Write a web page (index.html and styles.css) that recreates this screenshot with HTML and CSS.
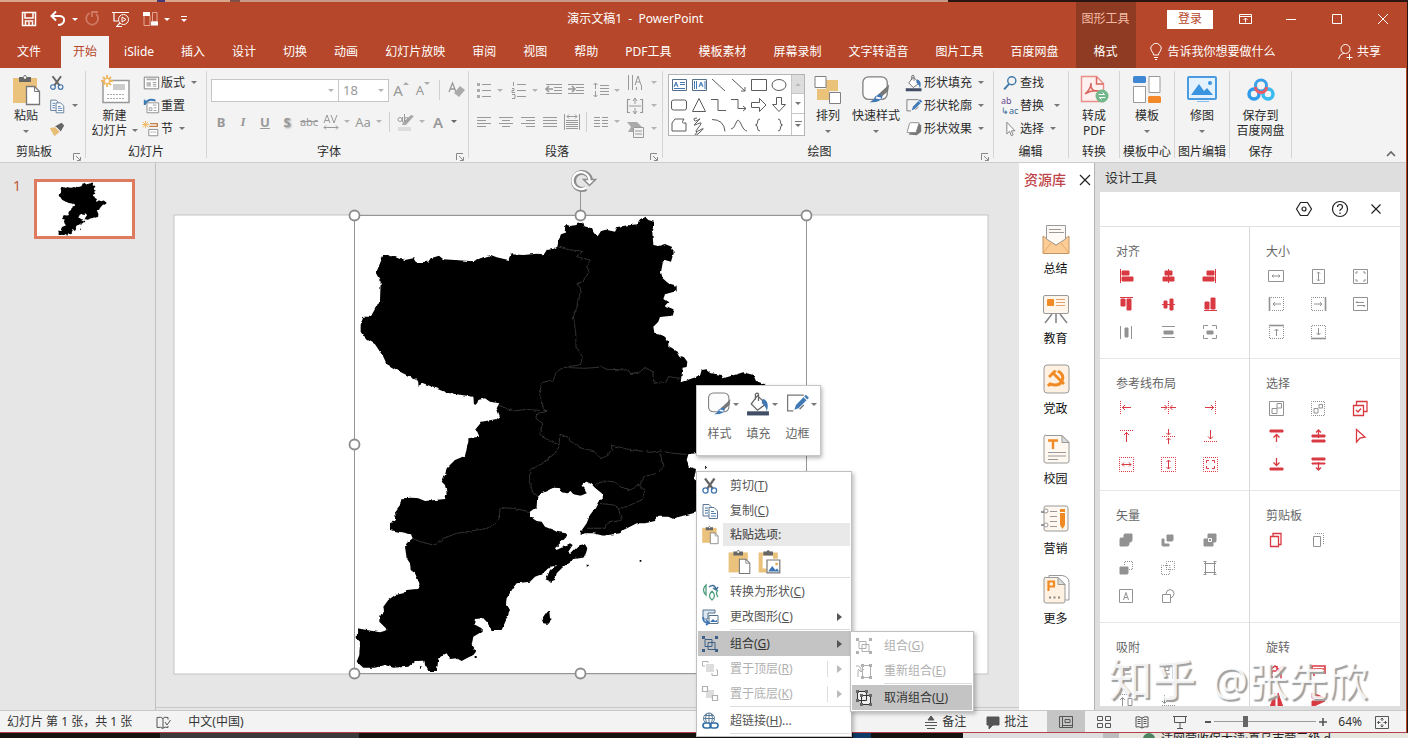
FILE: index.html
```html
<!DOCTYPE html>
<html lang="zh-CN">
<head>
<meta charset="utf-8">
<title>演示文稿1 - PowerPoint</title>
<link rel="stylesheet" href="styles.css">
</head>
<body>
<svg class="defs" aria-hidden="true">
  <filter id="coast" x="-5%" y="-5%" width="110%" height="110%"><feTurbulence type="fractalNoise" baseFrequency=".2" numOctaves="2" seed="4"/><feDisplacementMap in="SourceGraphic" scale="3" xChannelSelector="R" yChannelSelector="G"/></filter>
  <symbol id="map" viewBox="174 215 814 459" overflow="visible">
    <g filter="url(#coast)"><g transform="translate(340 165) scale(.33333)">
      <path fill="#000" d="M130 270 145 270 150 274 165 273 195 285 220 280 228 292 265 290 272 280 297 272 310 283 400 289 425 278 453 270 470 277 505 285 512 268 550 270 590 266 612 268 620 255 640 252 652 245 656 225 663 208 674 204 676 178 690 183 710 180 712 173 730 172 733 184 755 190 762 205 773 214 783 198 798 194 825 200 832 186 855 182 890 178 900 163 915 155 925 165 942 170 942 188 937 200 940 240 955 243 975 237 995 245 1001 262 993 290 975 285 968 295 963 322 968 340 985 355 1010 362 1010 378 975 388 970 402 985 412 975 422 1001 433 995 452 960 456 955 470 940 485 943 503 975 515 985 530 985 545 1010 560 1018 576 1030 574 1042 590 1040 606 1028 608 1022 652 1080 632 1085 615 1100 613 1115 625 1145 630 1150 640 1210 622 1240 630 1248 648 1275 658 1293 690 1240 730 1200 720 1122 813 1100 860 1045 868 1040 885 1046 905 1068 912 1062 942 1080 955 1075 1040 1040 1050 1015 1055 1000 1062 985 1055 950 1055 945 1068 915 1075 890 1075 870 1085 850 1095 840 1105 820 1108 790 1112 760 1105 735 1105 722 1110 722 1100 740 1075 750 1050 765 1030 775 1010 789 997 785 985 765 968 755 958 740 950 728 955 725 962 735 972 740 985 722 992 700 988 692 978 680 985 663 980 660 970 640 968 620 978 605 985 592 997 590 1025 570 1040 570 1055 590 1068 605 1070 615 1085 640 1095 650 1100 678 1105 680 1115 665 1130 645 1150 650 1155 670 1145 690 1135 698 1140 685 1160 690 1168 708 1150 720 1140 735 1138 742 1150 738 1165 730 1178 700 1182 690 1190 670 1205 650 1225 645 1245 630 1250 617 1245 630 1215 652 1200 630 1205 620 1215 605 1228 585 1235 570 1250 530 1255 520 1268 500 1300 498 1315 510 1335 505 1350 485 1395 455 1395 440 1370 430 1360 405 1362 402 1378 425 1390 425 1400 400 1415 395 1440 408 1460 400 1470 380 1480 365 1488 350 1480 330 1482 320 1465 310 1470 295 1480 293 1500 290 1518 265 1518 255 1500 253 1487 225 1488 205 1505 160 1508 135 1500 105 1508 70 1508 50 1490 58 1470 60 1430 50 1420 52 1390 80 1395 120 1402 143 1395 118 1370 118 1355 132 1340 130 1325 145 1305 165 1290 190 1285 200 1275 230 1272 238 1270 238 1255 225 1225 212 1215 210 1195 200 1180 195 1145 200 1135 218 1120 213 1108 150 1095 150 1075 168 1065 165 1040 180 1020 185 1000 215 998 235 1000 255 1008 315 1002 320 985 315 960 305 950 315 930 320 910 345 885 375 872 385 830 385 820 418 815 412 800 405 795 425 770 470 762 480 755 470 730 478 715 450 710 435 700 415 705 410 720 402 718 400 695 320 683 250 655 235 662 235 648 180 620 140 597 130 575 105 538 75 520 62 500 62 480 70 455 92 455 120 405 122 350 108 325ZM610 1375 605 1362 622 1338 628 1340 630 1358 635 1365 625 1377ZM740 1199h6v6h-6ZM899 1185h5v5h-5ZM1095 905h6v6h-6ZM404 1473h6v6h-6ZM240 1504h5v8h-5Z"/>
      <path fill="none" stroke="#4c4c4c" stroke-width="2" d="M652 245 690 255 725 258 710 275 750 285 740 305 748 320 730 348 712 358 722 370 715 415 700 455 707 500 708 545 727 575 722 598 690 605 670 608 650 620 640 645 608 652 597 685 605 700 610 730 620 740 590 745 588 760 608 775 600 805 605 815 635 830 657 840M690 608 735 610 785 606 800 613 865 615 870 625 895 625 915 607 938 620 942 655 980 648 985 635 1022 640M478 722 520 738 560 733 620 738M657 840 660 808 685 815 690 828 725 850 760 857 785 882 815 860 815 840 860 852 930 862 960 858 1000 865 1040 868M657 845 645 865 600 900 570 915 568 950 580 985 592 995M960 865 972 905 950 925 912 935 900 960 870 975 840 965 825 950 790 948 765 960M900 965 915 975 905 1005 860 1025 835 1030 820 1020 780 1015M835 1030 845 1065 800 1075 795 1090 740 1090M570 1040 520 1030 480 1028 478 1060 455 1085 430 1092 350 1105 310 1120 280 1140 240 1130 218 1120"/>
    </g></g>
  </symbol>
  <symbol id="cut" viewBox="0 0 20 20"><path d="M5 2.500 13 13M14.500 2.500 7 13" stroke="#666" stroke-width="2.200"/><circle cx="5.500" cy="14.500" r="2.600" stroke="#3f75ad" stroke-width="1.300"/><circle cx="14" cy="14.500" r="2.600" stroke="#3f75ad" stroke-width="1.300"/></symbol>
  <symbol id="copy" viewBox="0 0 20 20"><path d="M3 3.500h6l2 2V15H3z" fill="#f8f8f8" stroke="#5c7896"/><path d="M9 6.500h5l3.500 3.500v7.500H9z" fill="#fff" stroke="#5c7896"/><path d="M5 7h3M5 9.500h3M5 12h3M11 10.500h3M11 12.500h5M11 15h5" stroke="#4e7fb3"/></symbol>
  <symbol id="paste" viewBox="0 0 30 32"><path d="M2 4h24v25H2z" fill="#eac27c"/><path d="M8 8V3h4q2-4 4 0h4v5z" fill="#666"/><circle cx="14" cy="3.500" r="1.300" fill="#fff"/><path d="M15.500 12.500h8l5 5V30.500h-13z" fill="#fff" stroke="#777" stroke-width="1.300"/><path d="M23.500 12.500v5h5" stroke="#777"/></symbol>
  <symbol id="style" viewBox="0 0 32 32"><rect x="2" y="2" width="26" height="24" rx="6" fill="#fdfdfd" stroke="#808080" stroke-width="1.400"/><path d="m30 10-1 7-8 7-3-3z" fill="#777"/><path d="m20 20 3 3q-2 7-14 6 5-2 6-6z" fill="#4179b5"/><path d="m16 24 5 1" stroke="#fff" stroke-width="2"/></symbol>
  <symbol id="bucket" viewBox="0 0 24 24"><path d="m11 4 8 8-8 6-6-6zM9 8V2.500q2-2 3 0V9" fill="#fff" stroke="#666" stroke-width="1.200"/><path d="M16 7q7 2 4 12-1-5-5-8z" fill="#3f78b5"/><path d="M1 19h21v4H1z" fill="#414e66"/></symbol>
  <symbol id="outline" viewBox="0 0 24 24"><path d="M18 3.500H2.500v15H8M14 17l4-4" fill="none" stroke="#777" stroke-width="1.200"/><path d="m20 3 3 3-10 10-4 1.500L10.500 13z" fill="#4179b5"/><path d="m18 5 3 3" stroke="#fff"/></symbol>
  <symbol id="group" viewBox="0 0 20 20"><path d="M5 5.500h7v7H5zM8 8.500h7v7H8z" stroke="currentColor"/><path d="M2 2h3v3H2zM15 2h3v3h-3zM2 15h3v3H2zM15 15h3v3h-3z" fill="currentColor" stroke="none"/><path d="M3.500 7v6M16.500 7v6M7 3.500h6M7 16.500h6" stroke-dasharray="1 1.500"/></symbol>
  <symbol id="launch" viewBox="0 0 8 8"><path d="M.5 7V.5H7M3 3l4 4M7.500 4v3.500H4" stroke="#888"/></symbol>
</svg>
<div class="desk-top"></div>
<div class="app">
<header class="head">
  <div class="bar">
    <div class="qat">
      <button aria-label="保存"><svg viewBox="0 0 20 20"><path d="M3.500 3.500h13v13h-13zM6 4v5h8V4M6.500 16v-4h7v4M10 13v3" stroke-width="1.500"/></svg></button>
      <button class="undo" aria-label="撤消"><svg viewBox="0 0 20 20"><path d="M4 7h8q5 1 4 5t-6 4M8 2.500 3.500 7 8 11.500" stroke-width="2"/></svg><i class="dn"></i></button>
      <button class="dim" aria-label="重复"><svg viewBox="0 0 20 20"><path d="M8 4a6 6 0 1 0 6 1M10 8V3h6" stroke-width="1.800"/></svg></button>
      <button aria-label="放映"><svg viewBox="0 0 20 20"><path d="M1 3.500h17M3 4v8h4M5 17.500h6M9 14l-3 3" stroke-width="1.200"/><circle cx="12.500" cy="10.500" r="5" fill="#b7472a"/><path d="m11 8 4 2.500-4 2.500z"/></svg></button>
      <button class="lay" aria-label="版式"><svg viewBox="0 0 20 20"><path d="M4 6.500h6v10H4zM12.500 3.500H17v9h-4.500z" stroke="#e6a797"/><path d="M3 3h7v4H3zM11 12.500h7v4h-7z" fill="#fff" stroke="none"/></svg><i class="dn"></i></button>
      <button class="more" aria-label="自定义"><b></b><i class="dn"></i></button>
    </div>
    <h1>演示文稿1&nbsp; -&nbsp; PowerPoint</h1>
  </div>
  <div class="ctx">图形工具</div>
  <div class="win">
    <button class="login">登录</button>
    <button aria-label="功能区选项"><svg viewBox="0 0 16 16"><path d="M2.500 3.500h12v9h-12zM3 5.500h11M8.500 11.500V7M6.500 9l2-2 2 2"/></svg></button>
    <button aria-label="最小化"><svg viewBox="0 0 16 16"><path d="M3 8.500h10"/></svg></button>
    <button aria-label="最大化"><svg viewBox="0 0 16 16"><path d="M3.500 3.500h9v9h-9z"/></svg></button>
    <button aria-label="关闭"><svg viewBox="0 0 16 16"><path d="m3 3 10 10M13 3 3 13"/></svg></button>
  </div>
  <nav class="tabs">
    <button class="file">文件</button><button class="on">开始</button><button>iSlide</button><button>插入</button><button>设计</button><button>切换</button><button>动画</button><button>幻灯片放映</button><button>审阅</button><button>视图</button><button>帮助</button><button>PDF工具</button><button>模板素材</button><button>屏幕录制</button><button>文字转语音</button><button>图片工具</button><button>百度网盘</button>
  </nav>
  <button class="ctx fmt">格式</button>
  <div class="tell">
    <button><svg viewBox="0 0 16 18"><path d="M5.500 12q0-2-1.500-3.500a5 5 0 1 1 8 0Q10.500 10 10.500 12zM6 14.500h4M7 16.500h2"/></svg>告诉我你想要做什么</button>
    <button class="share"><svg viewBox="0 0 16 18"><circle cx="8.500" cy="6" r="4.500"/><path d="M1.500 16q1-5 5.500-6M12.500 11v6M9.500 14.500h6"/></svg>共享</button>
  </div>
</header>

<section class="ribbon">
  <div class="grp g-clip">
    <div class="body">
      <button class="big"><svg class="bi"><use href="#paste"/></svg><span>粘贴</span><i class="dn"></i></button>
      <div class="col">
        <button class="sm"><svg><use href="#cut"/></svg></button>
        <button class="sm"><svg><use href="#copy"/></svg><i class="dn"></i></button>
        <button class="sm"><svg viewBox="0 0 20 20"><path d="m2 9 6-1 5 5-6 5z" fill="#e8bd76"/><path d="m8 7 7-4 3 3-4 7z" fill="#666"/><path d="m9 8 5 5" stroke="#fff"/></svg></button>
      </div>
    </div>
    <div class="cap">剪贴板<svg class="la"><use href="#launch"/></svg></div>
  </div>
  <div class="grp g-slides">
    <div class="body">
      <button class="big"><svg class="bi" viewBox="0 0 30 32"><path d="M3 6.500h26v22H3z" fill="#fff" stroke="#999" stroke-width="1.500"/><path d="M13 10h12v6H13z" fill="#ccc"/><path d="M7 20.500h18M7 24.500h18" stroke="#aaa" stroke-dasharray="2 1"/><path d="M7 1v12M1 7h12M3 3l8 8M11 3l-8 8" stroke="#eeb65c" stroke-width="1.800"/><circle cx="7" cy="7" r="2" fill="#fff"/></svg><span>新建</span><span>幻灯片<i class="dn"></i></span></button>
      <div class="col">
        <button class="sm"><svg viewBox="0 0 20 20"><path d="M2.500 3.500h16v13h-16z" fill="#fff" stroke="#777"/><path d="M5 6h11" stroke="#aaa" stroke-width="2"/><path d="M5 9h5v5H5z" fill="#bbb"/><path d="M12 9.500h4M12 11.500h4M12 13.500h4" stroke="#999"/></svg>版式<i class="dn"></i></button>
        <button class="sm"><svg viewBox="0 0 20 20"><path d="M5.500 6.500h13v11h-13z" fill="#fff" stroke="#888"/><path d="M12 9h4M8 12h3v3H8zM13 12h3M13 15h3" stroke="#999"/><path d="M3 9V3M3 8q4-7 12-4" stroke="#3c79b4" stroke-width="2"/></svg>重置</button>
        <button class="sm"><svg viewBox="0 0 20 20"><path d="M4 1v8M0 5h8M1 2l6 6M7 2 1 8" stroke="#eeb65c"/><path d="M9 4h8v3H8" stroke="#c57f4b" stroke-width="1.500"/><path d="M7.500 10.500h10v7h-10z" fill="#fff" stroke="#888"/><path d="M9 13.500h7" stroke="#bbb"/></svg>节<i class="dn"></i></button>
      </div>
    </div>
    <div class="cap">幻灯片</div>
  </div>
  <div class="grp g-font off">
    <div class="body rows">
      <div class="row r1">
        <label class="combo name"><select aria-label="字体"><option></option></select></label><label class="combo size"><select aria-label="字号"><option>18</option></select></label>
        <button class="t ml">A<sup class="up"></sup></button><button class="t s2">A<sup class="dw"></sup></button><i class="sep"></i>
        <button class="t"><svg viewBox="0 0 20 20"><path d="M3 12 6.500 3 10 12M4 9h5" stroke-width="1.300"/><path d="m8 13 6-7 5 4-6 7z" fill="#aaa" stroke="none"/></svg></button>
      </div>
      <div class="row r2">
        <button class="t b">B</button><button class="t it">I</button><button class="t b u">U</button><button class="t b sh">S</button><button class="t st">abc</button><button class="t"><svg viewBox="0 0 20 20"><path d="M3 11 6 3l3 8M4 8.500h4M10 3l3 8 3-8M3 15.500h14M5 13.500l-2 2 2 2M15 13.500l2 2-2 2"/></svg></button><i class="dn"></i><button class="t aa">Aa</button><i class="dn"></i><i class="sep"></i><button class="t"><svg viewBox="0 0 20 20"><path d="M2 15h13v4H2z" fill="#ddd" stroke="none"/><path d="m18 4-8 9H6l1-3 8-7z" fill="#aaa" stroke="none"/><circle cx="4" cy="7.500" r="2"/><path d="M6.500 5v5M8.500 2v8"/><circle cx="10.500" cy="7.500" r="2"/></svg></button><i class="dn"></i><button class="t fc">A</button><i class="dn dk"></i>
      </div>
    </div>
    <div class="cap">字体<svg class="la"><use href="#launch"/></svg></div>
  </div>
  <div class="grp g-para off">
    <div class="body">
      <div class="rows">
        <div class="row r1">
          <button class="t"><svg viewBox="0 0 20 20"><path d="M8 4.500h9M8 10.500h9M8 16.500h9"/><path d="M3 3h3v3H3zM3 9h3v3H3zM3 15h3v3H3z" fill="#aaa" stroke="none"/></svg></button><i class="dn"></i>
          <button class="t ml1"><svg viewBox="0 0 20 20"><path d="M8 4.500h9M8 10.500h9M8 16.500h9M4.500 2v4M3 8.500h2v2H3v2h3M3 14.500h3v4H3"/></svg></button><i class="dn"></i>
          <button class="t ml1"><svg viewBox="0 0 20 20"><path d="M2 4.500h16M10 7.500h8M10 10.500h8M2 13.500h16"/><path d="M2 9h7M5 6 2 9l3 3" stroke-width="1.600"/></svg></button><button class="t"><svg viewBox="0 0 20 20"><path d="M2 4.500h16M10 7.500h8M10 10.500h8M2 13.500h16"/><path d="M2 9h7M6 6l3 3-3 3" stroke-width="1.600"/></svg></button>
          <button class="t ml1"><svg viewBox="0 0 20 20"><path d="M9 5.500h9M9 8.500h9M9 11.500h9M9 14.500h9M4.500 3v6M2.500 5l2-2 2 2M4.500 11v6M2.500 15l2 2 2-2"/></svg></button><i class="dn"></i>
        </div>
        <div class="row r2">
          <button class="t"><svg viewBox="0 0 20 20"><path d="M3 5.500h14M3 8.500h9M3 11.500h14M3 14.500h9"/></svg></button><button class="t"><svg viewBox="0 0 20 20"><path d="M3 5.500h14M6 8.500h8M3 11.500h14M6 14.500h8"/></svg></button><button class="t"><svg viewBox="0 0 20 20"><path d="M3 5.500h14M8 8.500h9M3 11.500h14M8 14.500h9"/></svg></button><button class="t"><svg viewBox="0 0 20 20"><path d="M3 5.500h14M3 8.500h14M3 11.500h14M3 14.500h14"/></svg></button><button class="t"><svg viewBox="0 0 20 20"><path d="M2.500 2v16M17.500 2v16M4 8.500h12M4 10.500h12M4 12.500h12M4 14.500h12M4 16.500h12M5 4.500h10M7 2.500l-2 2 2 2M13 2.500l2 2-2 2"/></svg></button><i class="sep"></i>
          <button class="t"><svg viewBox="0 0 20 20"><path d="M3 5.500h6M3 8.500h6M3 11.500h6M3 14.500h6M11 5.500h6M11 8.500h6M11 11.500h6M11 14.500h6"/></svg></button><i class="dn"></i>
        </div>
      </div>
      <div class="col c3">
        <button class="sm"><svg viewBox="0 0 20 20"><path d="M3.500 2v15M7.500 2v15M16.500 12v5M10 12l3-9 3 9M11 9h4M11.500 14v3"/></svg><i class="dn"></i></button>
        <button class="sm"><svg viewBox="0 0 20 20"><path d="M5 3.500H2.500v13H5M15 3.500h2.500v13H15M4 10h12" stroke-width="1.200"/><path d="M10 2v6M8 5l2-3 2 3M10 12v6M8 15l2 3 2-3"/></svg><i class="dn"></i></button>
        <button class="sm"><svg viewBox="0 0 20 20"><path d="M2 3h10l5 5H8v5H3l3-5z" fill="#aaa" stroke="none"/><path d="M8.500 8.500h10v10h-10z" fill="#f3f3f3"/><path d="M10 12h7M10 15h7"/></svg><i class="dn"></i></button>
      </div>
    </div>
    <div class="cap">段落<svg class="la"><use href="#launch"/></svg></div>
  </div>
  <div class="grp g-draw">
    <div class="body">
      <div class="gallery">
        <div class="shapes">
          <svg viewBox="0 0 20 20"><path d="M3.500 4.500h14v11h-14z" stroke="#556f8a"/><path d="m5 12 2-5 2 5M5.500 10h3M11 7.500h5M11 9.500h5M5 13.500h11" stroke="#4179b5"/></svg><svg viewBox="0 0 20 20"><path d="M3.500 4.500h14v11h-14z" stroke="#556f8a"/><path d="m10 12 2-5 2 5M10.500 10h3M5.500 6v8M7.500 6v8M16 6v8" stroke="#4179b5"/></svg><svg viewBox="0 0 20 20"><path d="m3 4 13 12"/></svg><svg viewBox="0 0 20 20"><path d="m3 4 13 12M16 12v4h-4"/></svg><svg viewBox="0 0 20 20"><path d="M2.500 4.500h15v11h-15z"/></svg><svg viewBox="0 0 20 20"><ellipse cx="10" cy="10" rx="7" ry="5.500"/></svg>
          <svg viewBox="0 0 20 20"><rect x="2.500" y="5" width="15" height="10" rx="2"/></svg><svg viewBox="0 0 20 20"><path d="m10 3.500 6.500 13h-13z"/></svg><svg viewBox="0 0 20 20"><path d="M2 4.500h7v11h8"/></svg><svg viewBox="0 0 20 20"><path d="M2 4.500h7v9h8M14 11l3 2.500-3 2.500"/></svg><svg viewBox="0 0 20 20"><path d="M2.500 7.500h8v-4l6.500 6.500-6.500 6.500v-4h-8z"/></svg><svg viewBox="0 0 20 20"><path d="M7.500 2.500v7h-4l6.500 7 6.500-7h-4v-7z"/></svg>
          <svg viewBox="0 0 20 20"><path d="M3 8 6 4h9q-4 5 2 4v8H3z"/></svg><svg viewBox="0 0 20 20"><path d="M8 3Q4 3 5 5t4 0 2-1-4 4-1 2 5-2-2 5 2 2-1 3-2-1"/></svg><svg viewBox="0 0 20 20"><path d="M3 4.500q12 0 13 12"/></svg><svg viewBox="0 0 20 20"><path d="M2 14Q5 14 7 8t5 1 6 7"/></svg><svg viewBox="0 0 20 20"><path d="M11 4Q8.500 4 8.500 7t-2 3q2 0 2 3t2.500 3"/></svg><svg viewBox="0 0 20 20"><path d="M9 4q2.500 0 2.500 3t2 3q-2 0-2 3T9 16"/></svg>
        </div>
        <div class="gs"><button class="g0"><i class="upa"></i></button><button><i class="dn"></i></button><button><b></b><i class="dn"></i></button></div>
      </div>
      <button class="big arr"><svg class="bi" viewBox="0 0 30 32"><path d="M13 6h12v11H13zM4 15h12v11H4z" fill="#ebc27a"/><path d="M2 2.500h11v11H2zM16.500 18.500h11v11h-11z" fill="#fff" stroke="#808080"/></svg><span>排列</span><i class="dn"></i></button>
      <button class="big qs"><svg class="bi"><use href="#style"/></svg><span>快速样式</span><i class="dn"></i></button>
      <div class="col">
        <button class="sm"><svg><use href="#bucket"/></svg>形状填充<i class="dn"></i></button>
        <button class="sm"><svg><use href="#outline"/></svg>形状轮廓<i class="dn"></i></button>
        <button class="sm"><svg viewBox="0 0 20 20"><path d="m4 16 9 1 5-4V6l-3-3z" fill="#777"/><path d="M6 3h9q1 0 .5 1l-3 9q-.5 1-1.500 1H3q-1 0-.5-1l2.500-9q.3-1 1-1z" fill="#fff" stroke="#888"/></svg>形状效果<i class="dn"></i></button>
      </div>
    </div>
    <div class="cap">绘图<svg class="la"><use href="#launch"/></svg></div>
  </div>
  <div class="grp g-edit">
    <div class="body"><div class="col">
      <button class="sm"><svg viewBox="0 0 20 20"><circle cx="12" cy="7.500" r="4.500" stroke="#4179a8" stroke-width="1.600"/><path d="m9 11-5.500 6" stroke="#4179a8" stroke-width="2.200"/></svg>查找</button>
      <button class="sm"><span class="abac"><em>ab</em><em class="c2">↳ac</em></span>替换<i class="dn far"></i></button>
      <button class="sm"><svg viewBox="0 0 20 20"><path d="M6.500 2.500v13l3-3 2 5 2-1-2-4.500h4z" fill="#fff" stroke="#777"/></svg>选择<i class="dn"></i></button>
    </div></div>
    <div class="cap">编辑</div>
  </div>
  <div class="grp g-pdf"><div class="body"><button class="big"><svg class="bi" viewBox="0 0 30 32"><path d="M2.500 2.500h15l7 7v18h-22z" fill="#fdf0ee" stroke="#e88e86" stroke-width="1.400"/><path d="M17.500 3v7h7M6 20q6-5 6-11-1 9 8 8-8-1-14 3" stroke="#d9655f" stroke-width="1.500"/><circle cx="23" cy="22" r="6.500" fill="#73b78a"/><path d="M19.500 20.500h6l-2-2M26.500 23.500h-6l2 2" stroke="#fff"/></svg><span>转成</span><span>PDF</span></button></div><div class="cap">转换</div></div>
  <div class="grp g-tpl"><div class="body"><button class="big"><svg class="bi" viewBox="0 0 30 32"><rect x="1" y="2" width="13" height="7" rx="1.500" fill="#3f86d4"/><path d="M17 2.500h11v16H17zM1.500 12.500h12v16h-12z" fill="#fff" stroke="#999"/><rect x="16" y="22" width="13" height="7" rx="1.500" fill="#f3892b"/></svg><span>模板</span><i class="dn"></i></button></div><div class="cap">模板中心</div></div>
  <div class="grp g-tpl"><div class="body"><button class="big"><svg class="bi" viewBox="0 0 30 32"><rect x="1" y="3" width="28" height="22" rx="1" fill="#e4f2fd" stroke="#4a9be0" stroke-width="2"/><path d="m4 21 8-11 5 7 3-3 6 7z" fill="#3b94e0"/><circle cx="23" cy="9" r="2" fill="#3b94e0"/><path d="M10 27.500h12" stroke="#80bff0"/></svg><span>修图</span><i class="dn"></i></button></div><div class="cap">图片编辑</div></div>
  <div class="grp g-save"><div class="body"><button class="big"><svg class="bi" viewBox="0 0 30 32"><circle cx="8" cy="20" r="5" stroke="#2f9bea" stroke-width="3.500"/><circle cx="22" cy="20" r="5" stroke="#3bbcf0" stroke-width="3.500"/><circle cx="15" cy="11.500" r="5.500" stroke="#3b9fe8" stroke-width="3"/><path d="M9.500 13a5.500 5.500 0 0 0 11 0" stroke="#ed5a64" stroke-width="3"/></svg><span>保存到</span><span>百度网盘</span></button></div><div class="cap">保存</div></div>
  <button class="fold" aria-label="折叠功能区"><svg viewBox="0 0 12 12"><path d="m2 8 4-4 4 4" stroke="#666" stroke-width="1.600"/></svg></button>
</section>

<main class="work">
  <aside class="thumbs"><span>1</span><div class="thumb"><svg viewBox="174 215 814 459"><use href="#map" x="174" y="215" width="814" height="459"/></svg></div></aside>
  <section class="stage">
    <svg class="slide" viewBox="174 215 814 459">
      <rect x="174" y="215" width="814" height="459" fill="#fff" stroke="#c4c4c4"/>
      <use href="#map" x="174" y="215" width="814" height="459"/>
      <g fill="none" stroke="#969696"><path d="M354.500 215.500h452v458h-452zM580.500 215V189"/>
      <g fill="#fff" stroke="#8c8c8c" stroke-width="1.800"><circle cx="354.500" cy="215.500" r="5"/><circle cx="580.500" cy="215.500" r="5"/><circle cx="806.500" cy="215.500" r="5"/><circle cx="354.500" cy="444.500" r="5"/><circle cx="354.500" cy="673.500" r="5"/><circle cx="580.500" cy="673.500" r="5"/></g>
      <path d="M586 188.500a8.500 8.500 0 1 1 4.500-8" stroke="#8c8c8c" stroke-width="5"/><path d="M583.500 179.500h12l-6 6z" fill="#fff" stroke="#8c8c8c" stroke-width="1.500"/><path d="M586 187.500a8.500 8.500 0 1 1 3.500-6" stroke="#fff" stroke-width="2.200"/></g>
    </svg>
  </section>
  <aside class="res">
    <h2>资源库<button aria-label="关闭"><svg viewBox="0 0 12 12"><path d="m1 1 10 10M11 1 1 11" stroke="#222" stroke-width="1.200"/></svg></button></h2>
    <button><svg viewBox="0 0 30 32"><path d="M2 13 15 22 28 13V30.500H2z" fill="#fbcd94" stroke="#c19669"/><path d="M5.500 16V2.500h19V16L15 22z" fill="#fffaf5" stroke="#999"/><path d="M8 6.500h12M8 9.500h15" stroke="#999"/><path d="m2 30 9-11M28 30l-9-11" stroke="#e7a869"/></svg>总结</button>
    <button><svg viewBox="0 0 30 32"><rect x="2.500" y="2.500" width="25" height="18" rx="1.500" fill="#fff5ea" stroke="#999"/><rect x="6" y="6" width="7" height="7" rx="1" fill="#f08a24"/><path d="M15 6.500h9M15 9.500h9M15 12.500h9" stroke="#e0a472"/><path d="M15 21v9M11 21 4 30M19 21l7 9" stroke="#888" stroke-width="1.600"/></svg>教育</button>
    <button><svg viewBox="0 0 30 32"><rect x="3" y="2" width="25" height="28" rx="3" fill="#fff1e2" stroke="#999"/><path d="m7 13 6-6 3 1-2 2 10 10-2 2-10-10-3 3z" fill="#f08a24"/><path d="M17 8q7 4 4 10t-12 3l-2 2" stroke="#f08a24" stroke-width="3"/></svg>党政</button>
    <button><svg viewBox="0 0 30 32"><path d="M5 2.500h16l7 7V28q0 2-2 2H5q-2 0-2-2V4q0-2 2-2z" fill="#fff8f0" stroke="#999"/><path d="M21 2.500v7h7z" fill="#ddd" stroke="#999"/><path d="M7 7.500h10M12 7v9" stroke="#f08a24" stroke-width="2.400"/><path d="M7 19.500h18M7 23h18M7 26.500h10" stroke="#999"/></svg>校园</button>
    <button><svg viewBox="0 0 30 32"><rect x="3" y="3" width="24" height="25" rx="2" fill="#fff8f0" stroke="#999"/><path d="M9 8.500h7M9 13.500h7M9 18.500h7M9 23.500h7" stroke="#999"/><path d="M0 9h5M0 22h5" stroke="#777" stroke-width="1.500"/><circle cx="5" cy="8" r="2" fill="#fff" stroke="#999"/><circle cx="5" cy="22" r="2" fill="#fff" stroke="#999"/><path d="M19 6h5v16l-2.500 4L19 22z" fill="#f08a24"/><path d="M19 9.500h5" stroke="#fff"/></svg>营销</button>
    <button><svg viewBox="0 0 30 32"><path d="M8 4V2.500h13q7 1 7 7V27h-4" fill="#fff" stroke="#999"/><path d="M5 4.500h12l7 7V28q0 2-2 2H5q-2 0-2-2V6q0-2 2-2z" fill="#fff1e2" stroke="#999"/><path d="M17 4.500v7h7z" fill="#ddd" stroke="#999"/><path d="M7.500 18V8.500h5.500v5H8" stroke="#f08a24" stroke-width="2.200"/><path d="M8 24.500h2M12.500 24.500h2M17 24.500h2" stroke="#888" stroke-width="2"/></svg>更多</button>
  </aside>
  <aside class="tools">
    <h2>设计工具</h2>
    <div class="pane">
      <div class="ptop">
        <button aria-label="设置"><svg viewBox="0 0 20 20"><path d="m6.500 3.500h7l4 6.500-4 6.500h-7L2.500 10z" stroke-width="1.200"/><circle cx="10" cy="10" r="2" stroke-width="1.200"/></svg></button>
        <button aria-label="帮助"><svg viewBox="0 0 20 20"><circle cx="10" cy="10" r="7.500" stroke-width="1.200"/><path d="M7.500 8q0-2.500 2.500-2.500T12.500 8q0 1.500-2.500 3v1M10 13.500v1.500" stroke-width="1.200"/></svg></button>
        <button aria-label="关闭"><svg viewBox="0 0 20 20"><path d="m5.500 5.500 9 9M14.500 5.500l-9 9" stroke-width="1.200"/></svg></button>
      </div>
      <div class="cells">
        <section><h3>对齐</h3><div class="ics red">
          <button><svg viewBox="0 0 20 20"><path d="M4.500 3v14"/><path class="f" d="M6 5h7v4H6zM6 11h11v4H6z"/></svg></button>
          <button><svg viewBox="0 0 20 20"><path d="M10.500 3v14"/><path class="f" d="M7 5h7v4H7zM5 11h11v4H5z"/></svg></button>
          <button><svg viewBox="0 0 20 20"><path d="M15.500 3v14"/><path class="f" d="M7 5h7v4H7zM3 11h11v4H3z"/></svg></button>
          <button><svg viewBox="0 0 20 20"><path d="M4 3.500h13"/><path class="f" d="M5 5h4v7H5zM11 5h4v11h-4z"/></svg></button>
          <button><svg viewBox="0 0 20 20"><path d="M4 10.500h13"/><path class="f" d="M6 7h3v7H6zM12 5h3v11h-3z"/></svg></button>
          <button><svg viewBox="0 0 20 20"><path d="M4 16.500h13"/><path class="f" d="M5 8h4v7H5zM11 4h4v11h-4z"/></svg></button>
          <button class="gy"><svg viewBox="0 0 20 20"><path d="M4.500 4v13M15.500 4v13"/><path class="f" d="M9 6h3v9H9z"/></svg></button>
          <button class="gy"><svg viewBox="0 0 20 20"><path d="M4 4.500h13M4 15.500h13"/><path class="f" d="M6 9h9v3H6z"/></svg></button>
          <button class="gy"><svg viewBox="0 0 20 20"><path d="M3.500 7V3.500H8M12 3.500h4.500V7M16.500 13v3.500H12M8 16.500H3.500V13" /><path class="f" d="M7 9h6v3H7z"/></svg></button>
        </div></section>
        <section><h3>大小</h3><div class="ics">
          <button><svg viewBox="0 0 20 20"><path d="M2.500 4.500h15v11h-15zM6 10h8M7.500 8.500 6 10l1.500 1.500M12.500 8.500 14 10l-1.500 1.500"/></svg></button>
          <button><svg viewBox="0 0 20 20"><path d="M4.500 3.500h12v14h-12zM10.500 6v9M9 7.500 10.500 6 12 7.500M9 13.500l1.500 1.500 1.500-1.500"/></svg></button>
          <button><svg viewBox="0 0 20 20"><path d="M3.500 3.500h14v14h-14zM6 8V6h2M13 6h2v2M15 13v2h-2M8 15H6v-2"/></svg></button>
          <button><svg viewBox="0 0 20 20"><path d="M3.500 3v14" stroke-width="1.600"/><path class="d" d="M5 3.500h12.500v13H5"/><path d="M7 10h8M9 8l-2 2 2 2"/></svg></button>
          <button><svg viewBox="0 0 20 20"><path d="M17.500 3v14" stroke-width="1.600"/><path class="d" d="M16 3.500H3.500v13H16"/><path d="M6 10h8M12 8l2 2-2 2"/></svg></button>
          <button><svg viewBox="0 0 20 20"><path d="M3.500 3.500h14v13h-14zM6 8.500h8M7.500 7 6 8.500M7 11.500h8M13.500 13l1.500-1.500"/></svg></button>
          <button><svg viewBox="0 0 20 20"><path d="M3 3.500h15" stroke-width="1.600"/><path class="d" d="M3.500 5v11.500h14V5"/><path d="M10.500 7v7M8.500 9l2-2 2 2"/></svg></button>
          <button><svg viewBox="0 0 20 20"><path d="M3 16.500h15" stroke-width="1.600"/><path class="d" d="M3.500 15V3.500h14V15"/><path d="M10.500 6v7M8.500 11l2 2 2-2"/></svg></button>
        </div></section>
        <section><h3>参考线布局</h3><div class="ics red ln">
          <button><svg viewBox="0 0 20 20"><path class="d" d="M4.500 3v14"/><path d="M6 9.500h9M9 7 6.500 9.500 9 12"/></svg></button>
          <button><svg viewBox="0 0 20 20"><path class="d" d="M10.500 3v14"/><path d="M3 9.500h6M6.500 7 9 9.500 6.500 12M18 9.500h-6M14.500 7 12 9.500l2.500 2.500"/></svg></button>
          <button><svg viewBox="0 0 20 20"><path class="d" d="M15.500 3v14"/><path d="M5 9.500h9M11 7l2.500 2.500L11 12"/></svg></button>
          <button><svg viewBox="0 0 20 20"><path class="d" d="M4 4.500h13"/><path d="M10.500 6v10M8 9l2.500-2.500L13 9"/></svg></button>
          <button><svg viewBox="0 0 20 20"><path class="d" d="M4 10.500h13"/><path d="M10.500 3v6M8.500 7l2 2 2-2M10.500 18v-6M8.500 14l2-2 2 2"/></svg></button>
          <button><svg viewBox="0 0 20 20"><path class="d" d="M4 15.500h13"/><path d="M10.500 4v9M8 10.500l2.500 2.500 2.500-2.500"/></svg></button>
          <button><svg viewBox="0 0 20 20"><path class="d e" d="M3.500 3.500h14v14h-14z"/><path d="M6 10.500h9M8 8.500l-2 2 2 2M13 8.500l2 2-2 2"/></svg></button>
          <button><svg viewBox="0 0 20 20"><path class="d e" d="M3.500 3.500h14v14h-14z"/><path d="M10.500 6v9M8.500 8l2-2 2 2M8.500 13l2 2 2-2"/></svg></button>
          <button><svg viewBox="0 0 20 20"><path class="d e" d="M3.500 3.500h14v14h-14z"/><path d="M6.500 9V6.500H9M12 6.500h2.500V9M14.500 12v2.500H12M9 14.500H6.500V12"/></svg></button>
        </div></section>
        <section><h3>选择</h3><div class="ics">
          <button><svg viewBox="0 0 20 20"><path d="M3.500 3.500h14v14h-14zM6 10.500h5v5H6zM11 5.500h4.500V10H11z"/></svg></button>
          <button><svg viewBox="0 0 20 20"><path class="d e" d="M3.500 3.500h13v14h-13z"/><path d="M6 10.500h4v4.500H6zM11 6.500h3.500V10H11z"/></svg></button>
          <button class="rd"><svg viewBox="0 0 20 20"><path d="M3.500 7.500h10v10h-10zM6.500 7V3.500h10.500v10H14M6 12l2 2 3-3.500" stroke-width="1.300"/></svg></button>
          <button class="rd"><svg viewBox="0 0 20 20"><path class="f" d="M4 4h13v2H4z"/><path d="M10.500 16V8.500M7.500 11.500l3-3 3 3" stroke-width="1.300"/></svg></button>
          <button class="rd"><svg viewBox="0 0 20 20"><path class="f" d="M4 9h13v2H4zM4 14h13v2H4z"/><path d="M10.500 12V4M8 6.500 10.500 4 13 6.500" stroke-width="1.300"/></svg></button>
          <button class="rd"><svg viewBox="0 0 20 20"><path d="M6.500 3.500 15 11l-5 1-3.500 4z" stroke-width="1.300"/></svg></button>
          <button class="rd"><svg viewBox="0 0 20 20"><path class="f" d="M4 14h13v2H4z"/><path d="M10.500 4v7.500M7.500 8.500l3 3 3-3" stroke-width="1.300"/></svg></button>
          <button class="rd"><svg viewBox="0 0 20 20"><path class="f" d="M4 4h13v2H4zM4 9h13v1H4z"/><path d="M10.500 8v8M8 13.500l2.500 2.500 2.500-2.500" stroke-width="1.300"/></svg></button>
        </div></section>
        <section><h3>矢量</h3><div class="ics">
          <button><svg viewBox="0 0 20 20"><path class="f" d="M4 9q0-1 1-1h3V5q0-1 1-1h7v6q0 2-2 2h-1v2q0 2-2 2H4z"/></svg></button>
          <button><svg viewBox="0 0 20 20"><path class="f" d="M9 5h6v5q0 1-1 1H9zM4 9h2v5h5v2H5q-1 0-1-1z"/></svg></button>
          <button><svg viewBox="0 0 20 20"><path class="f" d="M4 9h4V4h8v7q0 1-1 1h-2v4H4z"/><path d="M8.500 8.500h3v3h-3z" stroke="#fff" fill="#929292"/></svg></button>
          <button><svg viewBox="0 0 20 20"><path class="f" d="M4 9h8v6q0 1-1 1H4z"/><path class="d" d="M8.500 7V3.500h8v8H13"/></svg></button>
          <button><svg viewBox="0 0 20 20"><path class="d" d="M8.500 12V3.500h8v8h-8M12 7.500H3.500v9h8z"/></svg></button>
          <button><svg viewBox="0 0 20 20"><path d="M5.500 4v12M14.500 4v12M4 5.500h12M4 14.500h12M3.500 3.500h3M13.500 3.500h3M3.500 16.500h3M13.500 16.500h3"/></svg></button>
          <button><svg viewBox="0 0 20 20"><path d="M3.500 3.500h13v13h-13zM7.500 14l2.500-7.500 2.500 7.500M8.500 11.500h3"/></svg></button>
          <button><svg viewBox="0 0 20 20"><path d="M4.500 8.500h8v8h-8zM8 8q0-4 4-4.500 4 .5 4 4T12.500 12"/></svg></button>
        </div></section>
        <section><h3>剪贴板</h3><div class="ics">
          <button class="rd"><svg viewBox="0 0 20 20"><path d="M4.500 6.500h8v10h-8zM7 6V3.500h8v11h-2.500" stroke-width="1.300"/></svg></button>
          <button><svg viewBox="0 0 20 20"><path d="M5.500 6.500h7v10h-7z"/><path class="d" d="M7 3.500h8.500V15"/></svg></button>
        </div></section>
        <section><h3>吸附</h3><div class="ics">
          <button><svg viewBox="0 0 20 20"><path d="M5.500 3v14M9 4.500h4v4H9zM8 12h7"/></svg></button>
          <button><svg viewBox="0 0 20 20"><path d="M14.500 3v14M7 4.500h4v4H7zM5 12h7"/></svg></button><i></i>
          <button><svg viewBox="0 0 20 20"><path class="d" d="M4 4.500h13"/><path d="M6.500 16V8M4 10l2.500-2.500L9 10M12 8.500h4v7h-4z"/></svg></button>
          <button><svg viewBox="0 0 20 20"><path class="d" d="M4 15.500h13"/><path d="M6.500 5v8M4 11l2.500 2.500L9 11M12 6.500h4v5h-4z"/></svg></button>
        </div></section>
        <section><h3>旋转</h3><div class="ics red">
          <button><svg viewBox="0 0 20 20"><path d="m4 8 5-4 6 5M11 4v5l6-5M6 17V9h9v8" stroke-width="1.500"/></svg></button>
          <button><svg viewBox="0 0 20 20"><path d="M4 9V4h13v8M6 14V7h10" stroke-width="1.600"/></svg></button><i></i>
          <button><svg viewBox="0 0 20 20"><path class="f" d="M9 3v14H4zM12 3v14h5z"/></svg></button>
          <button><svg viewBox="0 0 20 20"><path class="f" d="M4 3h1l12 5H4zM4 11h13L4 17z"/></svg></button>
        </div></section>
      </div>
      <div class="mark"><b>知乎</b>@张先欣</div>
    </div>
  </aside>
</main>

<footer class="status">
  <span>幻灯片 第 1 张，共 1 张</span>
  <svg viewBox="0 0 16 16"><path d="M8 4.500q-2-2-6-1v10q4-1 6 1V4.500q1-2 5-1v2M8 14q2-1.500 5-.5V12M10 8l2 3 3.500-5"/></svg>
  <span class="lang">中文(中国)</span>
  <button class="note"><svg viewBox="0 0 16 16"><path d="M2 8.500h12M2 11.500h12M4 14.500h8"/><path d="m5 6 3-4 3 4z" fill="#555"/></svg>备注</button>
  <button class="cmt"><svg viewBox="0 0 16 16"><path d="M2 3h12v8H8l-4 4v-4H2z" fill="#555"/></svg>批注</button>
  <button class="vw on"><svg viewBox="0 0 16 16"><path d="M1.500 2.500h13v11h-13zM4.500 3v10M7 5.500h5v3H7zM5 11.500h9"/></svg></button>
  <button class="vw"><svg viewBox="0 0 16 16"><path d="M1.500 2.500h5v4h-5zM9.500 2.500h5v4h-5zM1.500 9.500h5v4h-5zM9.500 9.500h5v4h-5z"/></svg></button>
  <button class="vw"><svg viewBox="0 0 16 16"><path d="M8 4Q5 2 2 3v10q3-1 6 1 3-2 6-1V3q-3-1-6 1v10M3.500 5.500h3M3.500 7.500h3M3.500 9.500h3M9.500 5.500h3M9.500 7.500h3M9.500 9.500h3"/></svg></button>
  <button class="vw"><svg viewBox="0 0 16 16"><path d="M1 2.500h14M2.500 3v5.500h11V3M8 9v5M5 14.500h6"/></svg></button>
  <button class="z" aria-label="缩小"><svg viewBox="0 0 10 10"><path d="M2 5h6" stroke-width="2"/></svg></button>
  <input type="range" min="0" max="100" value="30" aria-label="缩放">
  <button class="z" aria-label="放大"><svg viewBox="0 0 10 10"><path d="M1 5h8M5 1v8" stroke-width="1.600"/></svg></button>
  <span class="pct">64%</span>
  <button class="fit" aria-label="适应窗口"><svg viewBox="0 0 16 16"><path d="M1.500 2.500h13v12h-13z"/><path d="M8 4v3M8 10v3M3.500 8.500h3M9.500 8.500h3M6.500 5.500 8 4l1.500 1.500M6.500 11.500 8 13l1.500-1.500M5 7 3.500 8.500 5 10M11 7l1.500 1.500L11 10"/></svg></button>
</footer>

<div class="mini">
  <button><span><svg><use href="#style"/></svg><i class="dn"></i></span>样式</button>
  <button><span><svg><use href="#bucket"/></svg><i class="dn"></i></span>填充</button>
  <button><span><svg><use href="#outline"/></svg><i class="dn"></i></span>边框</button>
</div>
<div class="menu main" role="menu">
  <button><svg><use href="#cut"/></svg>剪切(<u>T</u>)</button>
  <button><svg><use href="#copy"/></svg>复制(<u>C</u>)</button>
  <div class="phead"><svg><use href="#paste"/></svg><b>粘贴选项:</b></div>
  <div class="popt"><button aria-label="粘贴"><svg><use href="#paste"/></svg></button><button aria-label="粘贴为图片"><svg viewBox="0 0 30 32"><path d="M2 4h5v20h5v5H2zM20 4h6v8h-6zM6 4h18v4H6z" fill="#eac27c"/><path d="M8 8V3h4q2-4 4 0h4v5z" fill="#666"/><path d="M12.500 13.500h16v16h-16z" fill="#fff" stroke="#777" stroke-width="1.500"/><path d="m14 28 5-7 4 5 2-2 3 4z" fill="#3b74b4"/><path d="M23 17h3v3h-3z" fill="#e5a84a"/></svg></button></div>
  <hr>
  <button><svg viewBox="0 0 20 20"><path d="M6 3Q1 8 6 13zM12 9q-5 5 0 9 5-4 0-9M18 8q-3 3 0 7" stroke="#4d9b7c" stroke-width="1.300"/><path d="M9 5q5-4 7 2M13 6l3 2 2-3" stroke="#3f6f96" stroke-width="1.500"/></svg>转换为形状(<u>C</u>)</button>
  <button><svg viewBox="0 0 20 20"><path d="M3 3h12v3H8v6H3z" fill="#dbe7f1" stroke="#55728c"/><path d="M9 8.500h9v8H9z" fill="#fff" stroke="#55728c"/><path d="m10 15 3-3 2 2 2-1v2z" fill="#3b74b4" stroke="none"/><path d="M3 10q0 6 5 6M6 13l3 3-3 2" stroke="#3b74b4" stroke-width="1.600"/></svg>更改图形(<u>C</u>)<i class="rt"></i></button>
  <hr>
  <button class="hl"><svg class="gb"><use href="#group"/></svg>组合(<u>G</u>)<i class="rt"></i></button>
  <button class="no"><svg viewBox="0 0 20 20"><path d="M6 5h8v8H6z" fill="#ddd" stroke="none"/><path d="M5 7H2.500V2.500H8V4M16 11h1.500v5.500H12V14"/></svg>置于顶层(<u>R</u>)<i class="bar"></i><i class="rt"></i></button>
  <button class="no"><svg viewBox="0 0 20 20"><path d="M6 6h8v8H6z" fill="#ddd" stroke="none"/><path d="M2.500 2.500h5v5h-5zM12.500 11.500h5v5h-5z" fill="#fff" stroke-width="1.200"/></svg>置于底层(<u>K</u>)<i class="bar"></i><i class="rt"></i></button>
  <hr>
  <button><svg viewBox="0 0 20 20"><circle cx="9" cy="7.500" r="5.500" stroke="#5c7d99"/><path d="M3.500 7.500h11M9 2v11M5 4.500h8M6.500 3q-2 4 0 9M11.500 3q2 4 0 9" stroke="#5c7d99"/><rect x="3" y="12" width="8" height="5" rx="2.500" stroke="#2f6ea8" stroke-width="1.600" fill="#fff"/><rect x="10" y="12" width="8" height="5" rx="2.500" stroke="#2f6ea8" stroke-width="1.600"/></svg>超链接(<u>H</u>)...</button>
  <hr>
</div>
<div class="menu sub" role="menu">
  <button class="no"><svg><use href="#group"/></svg>组合(<u>G</u>)</button>
  <button class="no"><svg viewBox="0 0 20 20"><path d="M8.500 4.500h8v12h-8zM4 16V9"/><path d="M7 3h3v3H7zM15 3h3v3h-3zM7 15h3v3H7zM15 15h3v3h-3z" fill="currentColor" stroke="none"/><path d="M2 5q5-1 5 5M4 8l3 3 3-3"/></svg>重新组合(<u>E</u>)</button>
  <hr>
  <button class="hl"><svg viewBox="0 0 20 20"><path d="M3.500 3.500h9v9h-9zM7.500 7.500h9v9h-9z" fill="#eee"/><path d="M2 2h3v3H2zM11 2h3v3h-3zM2 11h3v3H2zM6 6h3v3H6zM15 6h3v3h-3zM6 15h3v3H6zM15 15h3v3h-3z" fill="#666" stroke="none"/></svg>取消组合(<u>U</u>)</button>
</div>
</div>
<div class="desk-bottom"><i></i><span>适网营收保大读·真乌市营三级.d</span></div>
</body>
</html>
```
FILE: styles.css
```css
* { box-sizing: border-box; }
body { margin: 0; height: 100vh; display: flex; flex-direction: column; overflow: hidden; background: #2a1512; font: 12px/16px "Noto Sans", "Noto Sans CJK SC", sans-serif; color: #333; }
button { border: 0; padding: 0; margin: 0; background: none; font: inherit; color: inherit; display: inline-flex; align-items: center; justify-content: center; white-space: nowrap; }
svg { fill: none; stroke: none; flex: none; }
i, em { font-style: normal; }
.defs { position: absolute; width: 0; height: 0; }
.desk-top { height: 2px; background: linear-gradient(90deg, #d9a68c 0 157px, #443a78 157px 165px, #d9a68c 165px 230px, #7d5148 230px 240px, #c79a86 240px 948px, #2a1512 948px); }
.app { flex: 1; min-height: 0; position: relative; display: flex; flex-direction: column; margin-right: 1px; border-right: 1px solid #b7472a; border-bottom: 1px solid #b5404b; }
.dn { display: inline-block; width: 0; height: 0; border: 3px solid transparent; border-top-color: #777; border-bottom: 0; flex: none; }

/* title bar and tabs */
.head { display: grid; grid-template-columns: auto 60px 1fr; grid-template-rows: 34px 32px; background: #b7472a; color: #fff; }
.head svg { stroke: currentColor; }
.head .dn { border-top-color: #fff; }
.bar { display: flex; align-items: center; }
.qat { display: flex; align-items: center; padding-left: 19px; width: 195px; }
.qat button { width: 20px; height: 20px; margin-right: 9px; }
.qat svg { width: 20px; height: 20px; }
.qat .undo, .qat .lay { width: 30px; gap: 4px; margin-right: 4px; }
.qat .dim { color: #cf7a63; margin-right: 9px; }
.qat .more { flex-direction: column; gap: 2px; margin: 0; }
.qat .more b { width: 6px; height: 1px; background: #fff; }
.bar h1 { flex: 1; margin: 0; text-align: center; font-size: 12px; font-weight: 400; }
.ctx { background: #8f3a22; color: #f3bba5; display: flex; align-items: center; justify-content: center; }
.fmt { color: #fff; }
.win { display: flex; align-items: center; justify-content: flex-end; }
.win svg { width: 16px; height: 16px; }
.win button { width: 46px; height: 28px; }
.win .login { width: 46px; height: 19px; background: #fff; color: #b7472a; margin-right: 9px; }
.tabs { display: flex; gap: 3px; padding-right: 5px; }
.tabs button { padding: 0 12px; }
.tabs .file { padding: 0 17px; }
.tabs .on { background: #f3f3f3; color: #b7472a; }
.tell { display: flex; justify-content: space-between; padding: 0 25px 0 12px; }
.tell button { gap: 4px; }
.tell svg { width: 16px; height: 18px; }

/* ribbon */
.ribbon { display: flex; background: #f3f3f3; border-bottom: 1px solid #cdcdcd; position: relative; padding: 3px 0 0; color: #2b2b2b; }
.grp { position: relative; border-right: 1px solid #d4d4d4; display: flex; flex-direction: column; margin-bottom: 4px; }
.ribbon .body { display: flex; height: 71px; }
.cap { text-align: center; height: 16px; line-height: 20px; position: relative; }
.la { position: absolute; right: 4px; bottom: -3px; width: 8px; height: 8px; }
.g-clip { width: 86px; } .g-slides { width: 121px; } .g-font { width: 262px; } .g-para { width: 194px; } .g-draw { width: 331px; }
.g-edit { width: 75px; } .g-pdf { width: 51px; } .g-tpl { width: 55px; } .g-save { width: 62px; }
.g-clip .cap, .g-font .cap, .g-para .cap, .g-draw .cap { padding-right: 17px; }
.big { flex-direction: column; justify-content: flex-start; padding-top: 3px; line-height: 15px; height: 71px; }
.bi { width: 30px; height: 32px; margin-bottom: 2px; }
.big > .dn { margin-top: 7px; }
.big span .dn { margin: 0 0 3px 4px; }
.g-clip .big { width: 46px; padding-left: 6px; }
.g-slides .big { width: 52px; padding-left: 5px; }
.g-pdf .big, .g-tpl .big, .g-save .big { flex: 1; }
.col { display: grid; grid-template-rows: repeat(3, 23px); justify-items: start; }
.sm { gap: 1px; }
.sm svg { width: 18px; height: 18px; }
.sm .dn { margin-left: 5px; }
.g-clip .col { padding-left: 2px; }
.g-slides .col { padding-left: 4px; }
.off { --g: #999; }
.off button { color: var(--g); }
.off svg { stroke: currentColor; }
.off .dn { border-top-color: #b4b4b4; }
.off .dk { border-top-color: #666; }
.off .sm svg { width: 20px; height: 20px; }
.rows { display: flex; flex-direction: column; }
.g-font .rows { flex-direction: column; padding-left: 3px; }
.row { display: flex; align-items: center; }
.r1 { height: 38px; } .r2 { height: 25px; }
.row .dn { margin: 0 2px; }
.sep { width: 1px; height: 20px; background: #d0d0d0; margin: 0 5px; }
.g-para .sep { margin: 0 3px; }
.t { width: 22px; height: 22px; flex: none; }
.t svg { width: 20px; height: 20px; }
.combo { position: relative; height: 23px; border: 1px solid #c6c6c6; background: #fff; display: flex; }
.combo::after { content: ""; position: absolute; right: 4px; top: 9px; border: 3px solid transparent; border-top-color: #b4b4b4; border-bottom: 0; }
.combo select { appearance: none; border: 0; background: none; width: 100%; padding: 0 4px; font: inherit; font-size: 13px; color: #999; }
.name { width: 128px; margin-left: 1px; } .size { width: 51px; margin-left: -1px; }
.g-font .t { font-size: 13px; }
.g-font .ml { margin-left: 1px; font-size: 15px; }
.up, .dw { width: 0; height: 0; border: 3px solid transparent; align-self: flex-start; }
.up { border-bottom-color: #aaa; border-top: 0; margin-top: 3px; } .dw { border-top-color: #aaa; border-bottom: 0; margin-top: 3px; }
.b { font-weight: 700; } .it { font-style: italic; font-family: "Liberation Serif", serif; font-weight: 700; } .u { text-decoration: underline; }
.sh { text-shadow: 1px 1px 2px #999; } .g-font .st { text-decoration: line-through; font-size: 11px; } .g-font .fc { font-size: 15px; font-weight: 600; }
.g-para .rows { padding-left: 4px; width: 156px; }
.ml1 { margin-left: 3px; }
.gallery { display: flex; border: 1px solid #b4b4b4; background: #fff; width: 137px; height: 62px; margin: 3px 0 0 5px; }
.shapes { display: grid; grid-template-columns: repeat(6, 20px); grid-template-rows: repeat(3, 20px); width: 122px; }
.shapes svg { width: 20px; height: 20px; stroke: #5c5c5c; }
.gs { display: grid; flex: 1; border-left: 1px solid #c6c6c6; }
.gs button { border-bottom: 1px solid #c6c6c6; flex-direction: column; gap: 2px; }
.gs button:last-child { border: 0; } .gs .g0 { background: #ddd; }
.gs b { width: 7px; height: 1px; background: #777; }
.upa { border: 3px solid transparent; border-bottom-color: #bbb; border-top: 0; }
.arr { width: 46px; } .qs { width: 50px; }
.g-draw .col { padding-left: 4px; }
.g-edit .col { padding-left: 7px; }
.abac { width: 18px; font-size: 9px; line-height: 10px; color: #6b4a91; display: grid; text-align: left; }
.c2 { color: #34689a; }
.sm .far { margin-left: 9px; }
.g-edit .cap { padding-right: 1px; }
.fold { position: absolute; right: 9px; bottom: 2px; width: 12px; height: 12px; }
.fold svg { width: 12px; height: 12px; }

/* workspace */
.work { flex: 1; min-height: 0; display: grid; grid-template-columns: 156px 1fr 76px 311px; background: #e6e6e6; }
.thumbs { border-right: 1px solid #c0c0c0; padding: 16px 20px 0 13px; display: flex; gap: 13px; align-items: flex-start; color: #c0563c; font-size: 14px; }
.thumbs span { line-height: 14px; }
.thumb { flex: 1; border: 3px solid #de7a5e; background: #fff; height: 60px; display: flex; }
.thumb svg { width: 100%; }
.stage { padding: 18px 31px 0 18px; display: flex; align-items: center; border-bottom: 1px solid #c8c8c8; margin-bottom: 2px; }
.slide { width: 100%; overflow: visible; }
.res { background: #fff; border-right: 1px solid #b4b4b4; display: flex; flex-direction: column; align-items: center; color: #111; z-index: 1; }
.res h2 { margin: 0 0 21px; padding-left: 5px; align-self: stretch; display: flex; gap: 13px; align-items: center; color: #c0454a; font-size: 14px; line-height: 33px; font-weight: 500; }
.res h2 svg { width: 12px; height: 12px; }
.res > button { flex-direction: column; height: 70px; justify-content: flex-start; padding: 6px 2px 0 0; }
.res > button svg { width: 30px; height: 32px; margin-bottom: 6px; }
.tools { background: #dedede; padding: 0 6px 4px 5px; display: flex; flex-direction: column; min-height: 0; }
.tools h2 { margin: 0; padding-left: 5px; font-size: 13px; font-weight: 400; line-height: 29px; }
.pane { flex: 1; min-height: 0; background: #fff; overflow: hidden; position: relative; }
.ptop { height: 35px; border-bottom: 1px solid #e2e2e2; display: flex; justify-content: flex-end; align-items: center; gap: 16px; padding-right: 14px; color: #222; }
.tools svg { width: 20px; height: 20px; stroke: currentColor; }
.cells { display: grid; grid-template-columns: 1fr 1fr; }
.cells section { height: 132px; border-bottom: 1px solid #e6e6e6; padding: 15px 0 0 16px; }
.cells section:nth-child(odd) { border-right: 1px solid #d8d8d8; }
.cells h3 { margin: 0; font-size: 12px; line-height: 20px; font-weight: 400; color: #666; }
.ics { display: grid; grid-template-columns: repeat(3, 42px); grid-auto-rows: 28px; color: #929292; justify-items: start; }
.ics.red, .ics .rd { color: #d93a42; }
.ics.red .gy { color: #929292; }
.ics .f { fill: currentColor; stroke-linejoin: round; }
.ics .d { stroke-dasharray: 1 1; }
.ics .e { stroke-dashoffset: .5; }
.mark { position: absolute; left: 8px; bottom: 0; font-size: 40px; line-height: 50px; color: rgba(255,255,255,.85); text-shadow: 2px 2px 1px #a0a0a0; white-space: nowrap; }
.mark b { font-size: 44px; font-weight: 500; margin-right: 16px; }

/* status bar */
.status { height: 22px; background: #f3f3f3; border-top: 1px solid #c8c8c8; display: flex; align-items: center; padding: 0 16px 0 7px; }
.status svg { width: 16px; height: 16px; stroke: #555; }
.status > svg { margin: 0 17px 0 23px; }
.lang { flex: 1; }
.note, .cmt { gap: 3px; margin-right: 19px; }
.vw { width: 38px; height: 21px; } .vw.on { background: #c5c5c5; }
.z svg { width: 10px; height: 10px; }
.vw + .z { margin-left: 4px; }
.status input { appearance: none; width: 102px; height: 14px; margin: 0 2px 0 1px; background: linear-gradient(#999, #999) center / 100% 1px no-repeat; }
.status input::-webkit-slider-thumb { appearance: none; width: 5px; height: 11px; background: #666; }
.pct { margin: 0 12px 0 10px; }

/* floating toolbar and menus */
.mini { position: absolute; left: 696px; top: 383px; width: 125px; height: 71px; background: #fff; border: 1px solid #c6c6c6; box-shadow: 1px 2px 4px rgba(0,0,0,.3); display: grid; grid-template-columns: repeat(3, 39px); padding: 4px 3px; color: #666; z-index: 2; }
.mini button { flex-direction: column; justify-content: flex-start; gap: 8px; }
.mini span { display: flex; align-items: center; padding-left: 6px; gap: 1px; height: 28px; }
.mini svg { width: 25px; height: 26px; }
.menu { position: absolute; display: flex; flex-direction: column; background: #fff; border: 1px solid #c0c0c0; padding: 1px; box-shadow: 2px 2px 4px rgba(0,0,0,.25); color: #555; z-index: 2; }
.main { left: 696px; top: 469px; width: 156px; }
.sub { left: 850px; top: 629px; width: 124px; z-index: 3; }
.menu > button { height: 25px; justify-content: flex-start; padding-right: 8px; }
.menu svg { width: 20px; height: 20px; margin: 0 10px 0 2px; stroke: currentColor; }
.menu hr { border: 0; height: 1px; background: #dcdcdc; margin: 0 0 1px 32px; }
.menu use { stroke: none; }
.menu .hl { background: #c4c4c4; color: #333; }
.menu .no { color: #b0b0b0; }
.menu .gb { color: #3d5f85; }
.rt { margin-left: auto; border: 4px solid transparent; border-left: 5px solid #555; border-right: 0; }
.no .rt { border-left-color: #bbb; margin-left: 9px; }
.menu .bar { width: 1px; height: 16px; background: #ddd; margin-left: auto; }
.phead { display: flex; height: 23px; align-items: center; }
.phead svg { width: 18px; margin: 0 4px 0 3px; }
.phead b { flex: 1; background: #e9e9e9; line-height: 23px; padding-left: 7px; font-weight: 500; }
.popt { height: 31px; display: flex; align-items: center; padding-left: 29px; gap: 6px; }
.menu .popt svg { width: 24px; height: 26px; margin: 0; stroke: none; }

/* strip of the desktop under the window */
.desk-bottom { height: 5px; flex: none; overflow: hidden; display: flex; line-height: 12px; color: #222; background: linear-gradient(90deg, #161210 0 160px, #3c3a38 160px 359px, #161210 359px 853px, #0d3a66 853px 871px, #161210 871px 963px, #dedede 963px 1103px, #bdbdbd 1103px 1119px, #e6e6de 1119px); }
.desk-bottom i { width: 12px; height: 12px; margin: 0 6px 0 1143px; border-radius: 6px; background: #4b8560; }
```
